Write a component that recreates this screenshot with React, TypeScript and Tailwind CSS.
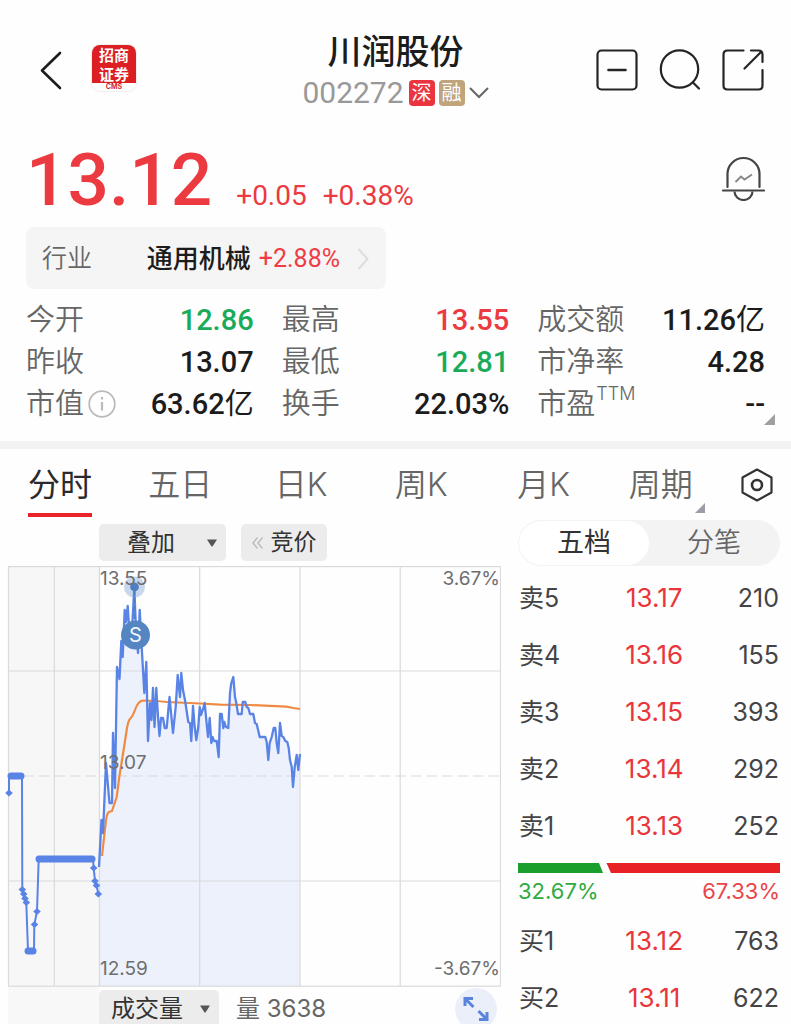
import type { ReactNode } from "react";

type Tone = "up" | "down" | "flat";

const toneClass: Record<Tone, string> = {
  up: "text-[#eb3a40]",
  down: "text-[#1aab5a]",
  flat: "text-[#1c1c1c]",
};

const stats: { label: string; value: string; tone: Tone; unit?: string; sup?: string; info?: boolean }[] = [
  { label: "今开", value: "12.86", tone: "down" },
  { label: "最高", value: "13.55", tone: "up" },
  { label: "成交额", value: "11.26", unit: "亿", tone: "flat" },
  { label: "昨收", value: "13.07", tone: "flat" },
  { label: "最低", value: "12.81", tone: "down" },
  { label: "市净率", value: "4.28", tone: "flat" },
  { label: "市值", value: "63.62", unit: "亿", tone: "flat", info: true },
  { label: "换手", value: "22.03%", tone: "flat" },
  { label: "市盈", value: "--", tone: "flat", sup: "TTM" },
];

const tabs = ["分时", "五日", "日K", "周K", "月K", "周期"];

const asks = [
  ["卖5", "13.17", "210"],
  ["卖4", "13.16", "155"],
  ["卖3", "13.15", "393"],
  ["卖2", "13.14", "292"],
  ["卖1", "13.13", "252"],
];

const bids = [
  ["买1", "13.12", "763"],
  ["买2", "13.11", "622"],
];

const pricePoints =
  "99,867 101.5,820 103,833 106,763 109.5,803 112,803 113,733 115,788 117,667 119.5,679 121.3,641 122.7,657 124.7,610 126,622 127.7,606 130,642 132,630 134.3,588 136,630 138,653 139.7,610 141.3,640 144.3,693 146.3,662 148,741 150,703 151.5,720 153,688 154.5,727 156.3,688 158,717 159.5,736 161,718 163,718 164.7,728 166.7,728 169.5,697 173,733 175.7,707 177.7,675 180,697 181.3,673 183,690 185,700 188.3,722 190,723 191.3,741 193,706 194.7,727 196.3,740 198.3,727 199.7,707 201,715 203.3,708 204.7,703 206.3,720 208,737 209.7,718 211.3,743 212.7,737 214,741 216.7,741 218.7,757 220,714 221.7,714 223.3,728 224.3,722 226,727 228.3,728 230,693 231.3,683 233.3,677 235,697 236.3,703 238,714 241.7,714 242.7,702 245.3,702 246.7,707 248.3,708 250,714 253.3,714 255,723 256.7,724 259.7,737 265.3,737 266.7,742 268.3,760 269.7,743 271.7,737 273.7,728 275.3,728 276.7,743 278.3,753 280,723 281.7,736 283.3,737 285.3,741 287.3,742 288.7,748 290,760 291.7,767 293,787 294.7,767 296.7,755 298.3,770 300,754";

const averagePath =
  "M102,856L106,820Q107,813 109,812L112,811L116.7,797L119.3,777L123.3,752L126.7,730Q128,721 130,719Q133,716 135,710Q138,701 143,700.5Q155,700.5 167,702L200,703.5L220,704.7L250,705L286.7,706.7L293.3,708L300,709";

const auctionPoints =
  "9,793 9,776 22,776 22.3,889 23.7,894 25,898 26.3,903 28,951 34,951 34.3,925 37,911 38.7,859 93,859 93.7,868 95,881 96.7,886 98.3,894";

const auctionDots: [number, number][] = [
  [9, 793], [22.3, 889.5], [23.7, 894], [25, 898.5], [26.3, 902.5], [34.5, 924.5], [37, 911.5], [93.7, 868], [95, 881], [96.5, 885.5], [98.3, 894],
];

const auctionBars = ["M11 776H21", "M28 951H33", "M39 859H92"];

function PriceChart() {
  return (
    <svg viewBox="0 566 501 421" className="block h-auto w-full" role="img" aria-label="分时走势">
      <rect x="8" y="566" width="91" height="420" fill="#f7f7f8" />
      <polygon points={`99,986 ${pricePoints} 300,986`} fill="#ecf1fc" />
      <g stroke="#dadadc" strokeWidth="1.2" fill="none">
        <rect x="8.5" y="566.6" width="492" height="419.6" />
        <path d="M54.3 566V986M99.5 566V986M199.7 566V986M300 566V986M400.2 566V986M8 671H501M8 881H501" />
        <path d="M8 776H501" strokeDasharray="10.5 5" />
      </g>
      <path d={averagePath} fill="none" stroke="#f08a42" strokeWidth="2.2" />
      <polyline points={pricePoints} fill="none" stroke="#5a83e6" strokeWidth="2.3" strokeLinejoin="round" />
      <polyline points={auctionPoints} fill="none" stroke="#5a83e6" strokeWidth="2" />
      {auctionDots.map(([x, y]) => (
        <path key={`${x}-${y}`} d={`M${x - 3.8} ${y}l3.8 -3.6l3.8 3.6l-3.8 3.6z`} fill="#5a83e6" />
      ))}
      {auctionBars.map((d) => (
        <path key={d} d={d} stroke="#5a83e6" strokeWidth="7" strokeLinecap="round" />
      ))}
      <circle cx="134.5" cy="587" r="10.5" fill="#6a94cf" fillOpacity="0.36" />
      <circle cx="134.5" cy="587" r="4.4" fill="#4d7fc0" />
      <path d="M134.5 590V622" stroke="#4d7fc0" strokeWidth="1.6" strokeDasharray="5 3" />
      <circle cx="135.5" cy="635" r="14.5" fill="#5686c2" />
      <text x="135.5" y="642" textAnchor="middle" fontSize="20" fontFamily="Inter, sans-serif" fill="#eef5fc">
        S
      </text>
      <g fill="#6e6e70" fontSize="19" fontFamily="Inter, sans-serif">
        <text x="100" y="585">13.55</text>
        <text x="100" y="769">13.07</text>
        <text x="100" y="975">12.59</text>
        <text x="500" y="585" textAnchor="end">3.67%</text>
        <text x="500" y="975" textAnchor="end">-3.67%</text>
      </g>
    </svg>
  );
}

function Caret() {
  return (
    <svg viewBox="0 0 12 8" className="pointer-events-none absolute right-2 top-1/2 h-2 w-3 -translate-y-1/2" aria-hidden="true">
      <path d="M1 .5h10L6.8 7q-.8 1-1.6 0z" fill="#555" />
    </svg>
  );
}

function Corner({ className }: { className: string }) {
  return (
    <svg viewBox="0 0 11 11" className={className} aria-hidden="true">
      <path d="M11 0V11H0z" />
    </svg>
  );
}

function IconButton({ label, children }: { label: string; children: ReactNode }) {
  return (
    <button type="button" aria-label={label} className="h-[42px] w-[42px]">
      <svg viewBox="0 0 42 42" className="h-full w-full" fill="none" stroke="#242424" strokeWidth="2.2" strokeLinecap="round">
        {children}
      </svg>
    </button>
  );
}

function BookTable({ rows, label }: { rows: string[][]; label: string }) {
  return (
    <table aria-label={label} className="w-full table-fixed text-[25px] leading-10 text-[#444446]">
      <tbody>
        {rows.map(([level, price, volume]) => (
          <tr key={level} className="h-[57px]">
            <th scope="row" className="w-[38%] p-0 text-left font-normal">{level}</th>
            <td className="p-0 text-center text-[26px] text-[#e8363a]">{price}</td>
            <td className="w-[34%] p-0 text-right">{volume}</td>
          </tr>
        ))}
      </tbody>
    </table>
  );
}

export default function App() {
  return (
    <main className="h-screen overflow-hidden bg-[#fefefe] font-['Inter','Noto_Sans_CJK_SC',sans-serif] text-[#1c1c1c]">
      <header className="grid grid-cols-[1fr_auto_1fr] items-center px-[27px] pt-[29px]">
        <div className="flex items-center gap-4">
          <button type="button" aria-label="返回" className="h-12 w-12">
            <svg viewBox="0 0 48 48" className="h-full w-full" fill="none" stroke="#1c1c1c" strokeWidth="2.6" strokeLinecap="round" strokeLinejoin="round">
              <path d="M33 7L15 24.5L33 42" />
            </svg>
          </button>
          <div className="-mt-1 flex h-[48px] w-[46px] flex-col overflow-hidden rounded-[9px] border border-[#eee] bg-white text-center">
            <div className="bg-[#dc1f22] font-['Noto_Sans_CJK_SC',sans-serif] text-[15px] font-bold leading-[19px] text-white">
              <div>招商</div>
              <div>证券</div>
            </div>
            <div className="text-[7px] font-bold leading-[8px] text-[#d32a2e]">CMS</div>
          </div>
        </div>
        <div className="text-center">
          <h1 className="text-[34px] font-medium leading-[46px]">川润股份</h1>
          <button type="button" className="flex h-9 items-center gap-1">
            <span className="font-['Roboto',sans-serif] text-[30px] leading-9 text-[#999]">002272</span>
            <span className="ml-px h-[26px] w-[26px] rounded-[4px] bg-[#ea3440] text-[20px] leading-[26px] text-white">深</span>
            <span className="h-[26px] w-[26px] rounded-[4px] bg-[#bfa47c] text-[20px] leading-[26px] text-white">融</span>
            <svg viewBox="0 0 20 12" className="h-3 w-5" fill="none" stroke="#666" strokeWidth="2" strokeLinecap="round" aria-hidden="true">
              <path d="M1.5 1.5L10 10L18.5 1.5" />
            </svg>
          </button>
        </div>
        <div className="flex justify-end gap-[21px]">
          <IconButton label="移出自选">
            <rect x="1.5" y="1.5" width="39" height="39" rx="4" />
            <path d="M12.5 21H29.5" strokeWidth="2.6" />
          </IconButton>
          <IconButton label="搜索">
            <circle cx="20.5" cy="20" r="18.7" />
            <path d="M34 33.5L40 39.5" />
          </IconButton>
          <IconButton label="分享">
            <path d="M21.5 1.5H5.5Q1.5 1.5 1.5 5.5V36.5Q1.5 40.5 5.5 40.5H36.5Q40.5 40.5 40.5 36.5V21" />
            <path d="M29 1.5H36.5Q40.5 1.5 40.5 5.5V13M39.5 2.5L22.5 19.5" />
          </IconButton>
        </div>
      </header>

      <section className="px-[26px]">
        <div className="mt-[30px] flex items-start justify-between">
          <p className="flex items-baseline font-['Roboto',sans-serif] text-[#eb3a40]">
            <strong className="text-[73px] font-medium leading-[78px]">13.12</strong>
            <span className="ml-6 text-[28px]">+0.05</span>
            <span className="ml-4 text-[28px]">+0.38%</span>
          </p>
          <button type="button" aria-label="预警" className="mt-3 h-12 w-[44px]">
            <svg viewBox="0 0 44 48" className="h-full w-full" fill="none" stroke="#444" strokeWidth="2.2">
              <path d="M6.5 34V21a16 16 0 0 1 32 0V34M2 37.5H43" strokeLinecap="round" />
              <path d="M13.5 38.5a9 8.5 0 0 0 18 0" />
              <path d="M14.5 29L20 23.5L23.5 26.5L31 21.5" stroke="#888" strokeWidth="2" />
            </svg>
          </button>
        </div>

        <a href="#industry" className="mt-2 flex h-[62px] w-[360px] items-center rounded-lg bg-[#f5f5f5] px-4 pt-px">
          <span className="text-[25px] font-[350] text-[#666]">行业</span>
          <span className="ml-auto text-[26px] font-medium">通用机械</span>
          <span className="ml-2 font-['Roboto',sans-serif] text-[25px] text-[#f03c44]">+2.88%</span>
          <svg viewBox="0 0 14 22" className="ml-4 h-[22px] w-[14px]" fill="none" stroke="#ddd" strokeWidth="2" aria-hidden="true">
            <path d="M2.5 1L11.5 11L2.5 21" />
          </svg>
        </a>

        <dl className="relative mt-[10px] grid grid-cols-3 gap-x-7">
          {stats.map((s) => (
            <div key={s.label} className="flex h-[42px] items-center justify-between">
              <dt className="flex items-center text-[29px] font-[350] leading-[42px] text-[#666]">
                {s.label}
                {s.sup && <sup className="top-0 mb-5 ml-px text-[18px] leading-5">{s.sup}</sup>}
                {s.info && (
                  <svg viewBox="0 0 28 28" className="ml-1 h-7 w-7" fill="none" stroke="#bbb" strokeWidth="1.8" aria-hidden="true">
                    <circle cx="14" cy="14" r="12.8" />
                    <path d="M14 12V20.5M14 7V9.5" strokeWidth="2.2" />
                  </svg>
                )}
              </dt>
              <dd className={`font-['Roboto','Noto_Sans_CJK_SC',sans-serif] text-[29px] font-medium leading-[42px] ${toneClass[s.tone]}`}>
                {s.value}
                {s.unit && <span className="font-normal">{s.unit}</span>}
              </dd>
            </div>
          ))}
          <Corner className="absolute -right-[10px] bottom-0 h-[11px] w-[11px] fill-[#a0a0a0]" />
        </dl>
      </section>

      <div className="mt-4 h-2 bg-[#f3f3f3]" />

      <nav className="grid grid-cols-[120fr_126fr_120fr_122fr_111fr_111fr_auto] items-center pl-7 pr-[17px] pt-4" aria-label="周期">
        {tabs.map((tab, i) => (
          <div key={tab}>
            <button
              type="button"
              aria-current={i === 0 ? "page" : undefined}
              className={
                i === 0
                  ? "block border-b-4 border-[#e9232a] pb-2 text-[32px] leading-10 text-[#2a2a2a]"
                  : "relative block border-b-4 border-transparent pb-2 text-[32px] font-[350] leading-10 text-[#666]"
              }
            >
              {tab}
              {tab === "周期" && <Corner className="absolute -right-3 bottom-0 h-[10px] w-[10px] fill-[#9a9da5]" />}
            </button>
          </div>
        ))}
        <button type="button" aria-label="设置" className="mb-3 h-[34px] w-[34px]">
          <svg viewBox="0 0 34 34" className="h-full w-full" fill="none" stroke="#333" strokeWidth="2.2" strokeLinejoin="round">
            <path d="M17 1.5L31.5 9.5V24.5L17 32.5L2.5 24.5V9.5z" />
            <circle cx="17" cy="17" r="5" strokeWidth="2.6" />
          </svg>
        </button>
      </nav>

      <div className="flex pr-[11px]">
        <section className="min-w-0 flex-1">
          <div className="flex gap-[15px] pb-[5px] pl-[99px] pt-[7px]">
            <div className="relative">
              <select aria-label="叠加" className="block h-[37px] w-[127px] appearance-none rounded-[5px] bg-[#ececec] pl-7 text-[24px] text-[#333]">
                <option>叠加</option>
              </select>
              <Caret />
            </div>
            <button type="button" className="flex h-[37px] w-[86px] items-center justify-center gap-2 rounded-[5px] bg-[#ececec] text-[23px] leading-[37px] text-[#333]">
              <svg viewBox="0 0 11 12" className="h-3 w-[11px]" fill="none" stroke="#bbb" strokeWidth="1.4" aria-hidden="true">
                <path d="M5.5 .5L1 6L5.5 11.5M10.5 .5L6 6L10.5 11.5" />
              </svg>
              竞价
            </button>
          </div>
          <PriceChart />
          <div className="flex items-start">
            <div className="ml-2 h-[42px] w-[91px] bg-[#f8f8f8]" />
            <div className="relative mt-[3px]">
              <select aria-label="指标" className="block h-[38px] w-[120px] appearance-none rounded-[5px] bg-[#ececec] pl-3 text-[24px] text-[#333]">
                <option>成交量</option>
              </select>
              <Caret />
            </div>
            <p className="ml-[17px] mt-[3px] text-[24px] leading-[38px] text-[#666]">量 3638</p>
            <button type="button" aria-label="全屏" className="ml-auto mr-1 mt-px h-[42px] w-[42px] rounded-full bg-[#eaeff9]">
              <svg viewBox="0 0 42 42" className="h-full w-full" fill="none" stroke="#5b84dc" strokeWidth="3">
                <path d="M10 18V10.5H18M10.5 11L18.5 19M32 24V31.5H24M31.5 31L23.5 23" />
              </svg>
            </button>
          </div>
        </section>

        <aside className="ml-[17px] w-[262px] shrink-0 pt-[3px]">
          <div className="grid h-[46px] grid-cols-2 rounded-full bg-[#f3f3f3] p-px text-[27px] leading-[44px]">
            <button type="button" aria-pressed="true" className="rounded-full bg-white text-[#333]">五档</button>
            <button type="button" aria-pressed="false" className="font-[350] text-[#666]">分笔</button>
          </div>
          <div className="px-px pt-[3px]">
            <BookTable rows={asks} label="卖盘" />
          </div>
          <svg viewBox="0 0 262 10" className="mt-[9px] block w-full" aria-hidden="true">
            <path d="M0 0H81L85 10H0z" fill="#1a9f2c" />
            <path d="M88.5 0H262V10H93z" fill="#e82224" />
          </svg>
          <div className="flex justify-between text-[22px] leading-9">
            <span className="text-[#2fab42]">32.67%</span>
            <span className="text-[#e9464a]">67.33%</span>
          </div>
          <div className="px-px pt-[3px]">
            <BookTable rows={bids} label="买盘" />
          </div>
        </aside>
      </div>
    </main>
  );
}
